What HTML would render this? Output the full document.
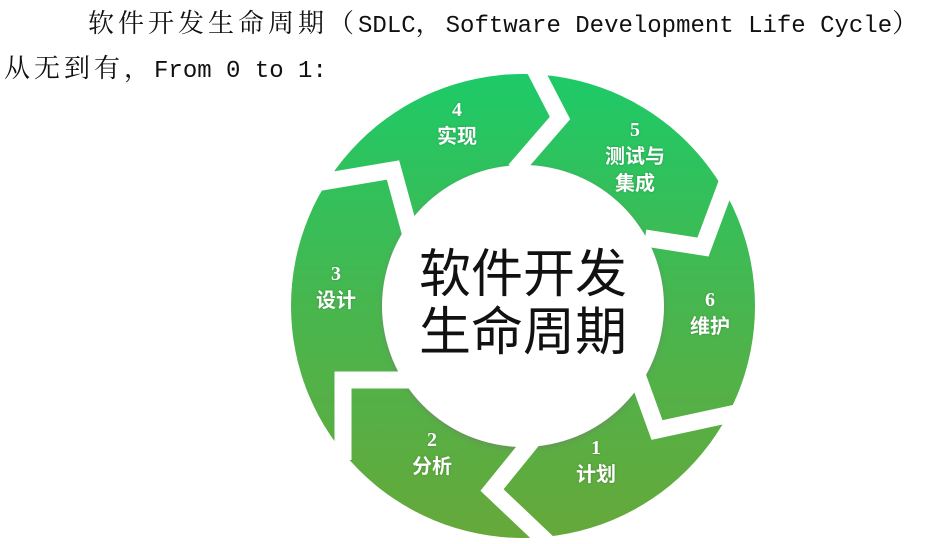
<!DOCTYPE html>
<html><head><meta charset="utf-8"><style>
html,body{margin:0;padding:0;background:#fff;}
body{width:938px;height:544px;position:relative;overflow:hidden;}
.t{position:absolute;white-space:nowrap;font-size:24px;color:#111;font-family:"Liberation Mono","Noto Serif CJK SC",monospace;line-height:30px;}
.c{letter-spacing:4px;font-size:26px;font-family:"Noto Serif CJK SC","Liberation Serif",serif;}
.lab{position:absolute;color:#fff;font-family:"Liberation Serif","Noto Sans CJK SC",sans-serif;font-weight:bold;font-size:20px;text-align:center;width:120px;line-height:27px;text-shadow:0 0 2px rgba(0,0,0,.25);}
.big{position:absolute;left:373px;width:300px;text-align:center;font-family:"Noto Sans CJK SC",sans-serif;font-size:52px;line-height:58px;color:#111;}
</style></head><body>
<div class="t" style="left:88px;top:7px"><span class="c">软件开发生命周期（</span>SDLC<span class="c">，</span>Software Development Life Cycle<span class="c">）</span></div>
<div class="t" style="left:4px;top:52px"><span class="c">从无到有，</span>From 0 to 1:</div>
<svg width="938" height="544" style="position:absolute;left:0;top:0">
<defs><linearGradient id="g" x1="0" y1="0" x2="0" y2="1"><stop offset="0" stop-color="#1dca68"/><stop offset="0.5" stop-color="#48b64e"/><stop offset="1" stop-color="#66a83a"/></linearGradient>
<filter id="s"><feGaussianBlur stdDeviation="3"/></filter></defs>
<circle cx="523" cy="306" r="232" fill="url(#g)"/>
<circle cx="523" cy="308" r="141" fill="#777" filter="url(#s)" opacity=".5"/>
<circle cx="523" cy="306" r="141" fill="#fff"/>
<g fill="none" stroke="#fff" stroke-width="17" stroke-linejoin="miter" stroke-miterlimit="10">
<polyline points="310,184 393,170 410,232"/>
<polyline points="530,60 560,118 515,170"/>
<polyline points="728,180 703,247 645,238"/>
<polyline points="745,411 657,430 636,372"/>
<polyline points="550,545 492,490 535,437"/>
<polyline points="343,460 343,380 415,380"/>
</g>
</svg>
<div class="lab" style="left:397px;top:97px">4<br>实现</div>
<div class="lab" style="left:575px;top:117px">5<br>测试与<br>集成</div>
<div class="lab" style="left:650px;top:287px">6<br>维护</div>
<div class="lab" style="left:536px;top:435px">1<br>计划</div>
<div class="lab" style="left:372px;top:427px">2<br>分析</div>
<div class="lab" style="left:276px;top:261px">3<br>设计</div>
<div class="big" style="top:241px">软件开发</div>
<div class="big" style="top:299px">生命周期</div>
</body></html>
